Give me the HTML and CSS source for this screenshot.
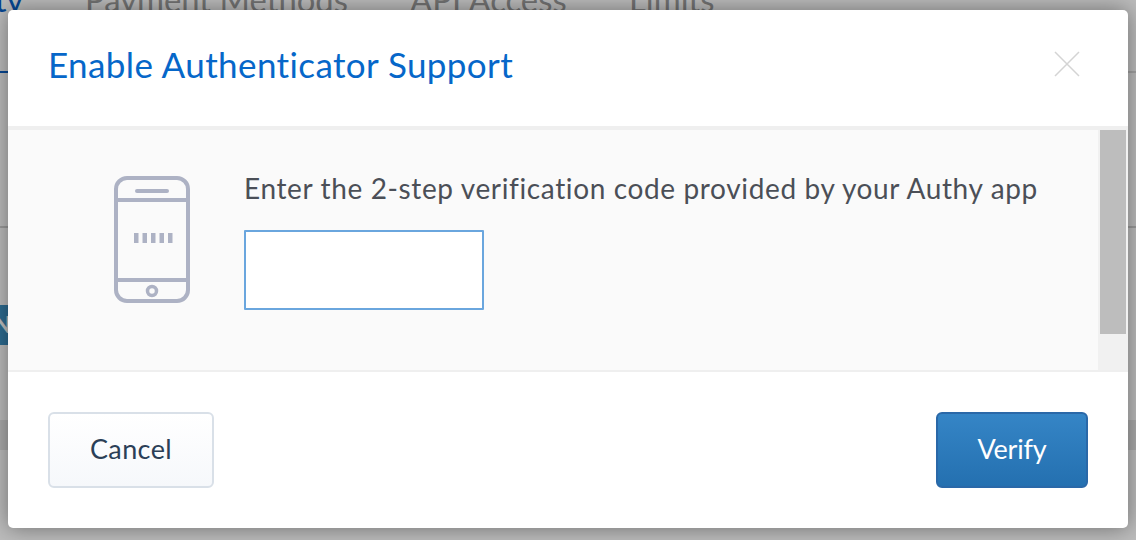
FILE: index.html
```html
<!DOCTYPE html>
<html lang="en">
<head>
  <meta charset="UTF-8" />
  <meta name="viewport" content="width=device-width, initial-scale=1.0" />
  <title>Enable Authenticator Support</title>
  <link rel="stylesheet" href="styles.css">
</head>
<body>

  <!-- Page behind the dialog -->
  <div class="page">
    <nav class="tabs">
      <a class="tab tab-active">Security</a>
      <a class="tab tab-payment">Payment Methods</a>
      <a class="tab tab-api">API Access</a>
      <a class="tab">Limits</a>
    </nav>
    <div class="section"></div>
    <span class="badge">N</span>
    <div class="band"></div>
  </div>

  <!-- Dimmed overlay + dialog -->
  <div class="overlay">
    <div class="modal">
      <header class="modal-head">
        <h1>Enable Authenticator Support</h1>
        <button class="close" type="button" aria-label="Close">
          <svg width="28" height="28" viewBox="0 0 28 28">
            <path d="M2 2 L26 26 M26 2 L2 26" fill="none" stroke="#d4d4d4" stroke-width="1.5"/>
          </svg>
        </button>
      </header>

      <div class="modal-body">
        <div class="modal-content">
          <svg class="phone" width="80" height="130" viewBox="0 0 80 130">
            <g fill="none" stroke="#adb2c4" stroke-width="4">
              <rect x="4" y="3" width="72" height="123" rx="11"/>
              <path d="M4 25 H76 M4 105 H76"/>
              <circle cx="40" cy="116" r="4.5" stroke-width="3.5"/>
            </g>
            <rect x="23" y="14" width="34" height="4" rx="2" fill="#adb2c4"/>
            <g fill="#adb2c4">
              <rect x="22" y="58" width="4.5" height="10"/>
              <rect x="30.5" y="58" width="4.5" height="10"/>
              <rect x="39" y="58" width="4.5" height="10"/>
              <rect x="47.5" y="58" width="4.5" height="10"/>
              <rect x="56" y="58" width="4.5" height="10"/>
            </g>
          </svg>
          <div class="code-form">
            <p>Enter the 2-step verification code provided by your Authy app</p>
            <input class="code-input" type="text">
          </div>
        </div>
        <div class="scrollbar"><div class="scrollbar-thumb"></div></div>
      </div>

      <footer class="modal-foot">
        <button class="btn btn-cancel" type="button">Cancel</button>
        <button class="btn btn-verify" type="button">Verify</button>
      </footer>
    </div>
  </div>

</body>
</html>
```

FILE: styles.css
```css
/* ===== layout ===== */
*{box-sizing:border-box;}
html,body{margin:0;height:100%;}
body{
  position:relative;overflow:hidden;
  background:#fbfbfb;font-family:'Lato','Noto Sans',sans-serif;
}

/* ===== page behind ===== */
.page{height:540px;overflow:hidden;}
.tabs{
  display:flex;height:73px;
  border-bottom:2px solid #d8d8d8;
  font-size:32.8px;color:#9a9a9a;
}
.tab{line-height:24px;height:71px;white-space:nowrap;margin-top:-12px;}
.tab-active{
  color:#0a5fc4;width:85px;text-indent:-94px;
  border-bottom:2px solid #0a5fc4;height:85px;
}
.tab-payment{width:325px;}
.tab-api{width:219px;}
.section{height:155px;border-bottom:2px solid #cfcfcf;}
.badge{
  display:block;width:40px;height:40px;margin:77px 0 0 -22px;padding-left:16px;
  background:#3c8fc0;color:#fff;font-weight:700;font-size:22px;line-height:40px;
}
.band{height:30px;margin-top:75px;background:#e4e4e4;}

/* ===== overlay + dialog ===== */
.overlay{
  position:absolute;inset:0;padding:10px 8px 12px;
  background:rgba(0,0,0,.25);
}
.modal{
  display:flex;flex-direction:column;height:518px;
  background:#fff;border-radius:5px;overflow:hidden;
  box-shadow:0 0 22px rgba(0,0,0,.42);
}

/* ===== head ===== */
.modal-head{
  display:flex;align-items:center;justify-content:space-between;
  height:120px;flex:none;padding:0 47px 8px 40px;
  border-bottom:4px solid #efefef;
}
.modal-head h1{margin:0;font-size:35px;font-weight:400;color:#0667c9;letter-spacing:.4px;}
.close{background:none;border:0;padding:0;display:flex;}

/* ===== body ===== */
.modal-body{
  display:flex;height:242px;flex:none;
  background:#fafafa;border-bottom:2px solid #efefef;
}
.modal-content{flex:1;display:flex;gap:52px;padding:44px 0 0 104px;}
.phone{flex:none;margin-top:1px;}
.code-form p{
  margin:-2px 0 26px;font-size:28px;line-height:32px;color:#4b4f57;
  letter-spacing:.63px;white-space:nowrap;
}
.code-input{
  display:block;width:240px;height:80px;
  background:#fff;border:2px solid #6aa6de;border-radius:1px;
}
.scrollbar{width:30px;flex:none;padding:0 2px;background:#f1f1f1;}
.scrollbar-thumb{height:204px;background:#bdbdbd;}

/* ===== foot ===== */
.modal-foot{flex:1;display:flex;align-items:flex-start;justify-content:space-between;padding:40px 40px 0;}
.btn{
  height:76px;padding:0 0 4px;border-radius:6px;font-family:inherit;font-size:27px;cursor:pointer;
}
.btn-cancel{
  width:166px;color:#2b3f57;border:2px solid #d9e0e8;letter-spacing:.4px;
  background:linear-gradient(#fff,#f6f8fb);
}
.btn-verify{
  width:152px;color:#fff;border:2px solid #2a68a8;letter-spacing:-.2px;
  background:linear-gradient(#3585c6,#2470b0);
}
```
